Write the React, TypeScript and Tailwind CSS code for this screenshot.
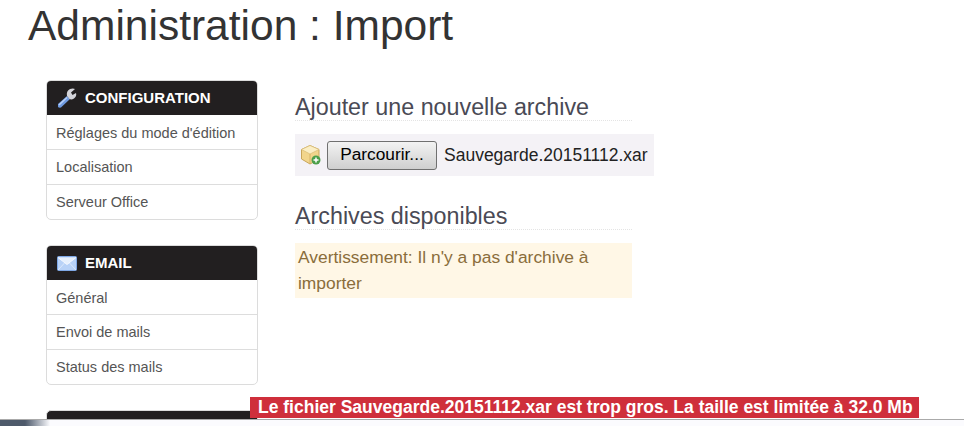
const font = { fontFamily: '"Liberation Sans", Arial, sans-serif' }

function WrenchIcon() {
  return (
    <svg width="22" height="22" viewBox="0 0 22 22" className="flex-shrink-0">
      <path d="M2 17 L11 9 L14 12 L5 20.5 Q3 21 2 20 Z" fill="#6f9ae0" />
      <path d="M3 18 L11 10.5" stroke="#b9d0f5" strokeWidth="1.5" fill="none" />
      <path d="M11 9 Q10 4 14 2 Q17 1 19 2 L15 5.5 L16.5 8 L20 6 Q21 9 18 11.5 Q15.5 13 13.5 12 Z" fill="#d4d4da" />
    </svg>
  )
}

function MailIcon() {
  return (
    <svg width="20" height="15" viewBox="0 0 20 15" className="flex-shrink-0">
      <rect x="0.5" y="0.5" width="19" height="14" rx="1" fill="#b8d2f7" stroke="#7fa8e6" />
      <path d="M1 1.5 L10 8.5 L19 1.5" fill="#e6f0fd" stroke="#f4f8ff" strokeWidth="1" />
      <path d="M1 14 L7.5 7 M19 14 L12.5 7" stroke="#dce9fb" strokeWidth="1" fill="none" />
    </svg>
  )
}

function PackageIcon() {
  return (
    <svg width="22" height="22" viewBox="0 0 22 22" className="flex-shrink-0">
      <path d="M10 1.5 L19 5.5 L19 15 L10 20 L1.5 15 L1.5 5.5 Z" fill="#f2d58c" stroke="#c9a65a" />
      <path d="M1.5 5.5 L10 10 L19 5.5 L10 1.5 Z" fill="#fbeec4" stroke="#d8bb75" strokeWidth="0.7" />
      <path d="M10 10 L10 20" stroke="#d0ab60" strokeWidth="0.8" />
      <circle cx="16" cy="16" r="4.5" fill="#4c9f4a" />
      <path d="M16 13.5 V18.5 M13.5 16 H18.5" stroke="#fff" strokeWidth="1.5" />
    </svg>
  )
}

function SideCard({ icon, title, items }: { icon: React.ReactNode; title: string; items: string[] }) {
  return (
    <div className="w-[212px] rounded-[5px] border border-[#dcdcdc] bg-white">
      <div className="flex items-center gap-[7px] h-[34px] pl-[9px] bg-[#221f20] rounded-t-[4px] text-white font-bold text-[15px]">
        <span className="flex w-[22px] justify-center">{icon}</span>
        <span>{title}</span>
      </div>
      {items.map((item, i) => (
        <div
          key={item}
          className={`flex items-center pl-[9px] text-[14.5px] text-[#555555] ${i > 0 ? 'h-[35px] pt-[2px] border-t border-[#dddddd]' : 'h-[34px] pt-[3px]'}`}
        >
          {item}
        </div>
      ))}
    </div>
  )
}

export default function App() {
  return (
    <div style={font} className="relative h-[426px] w-[964px] overflow-hidden bg-white text-[#333333]">
      <h1 className="pl-[28px] h-[80px] text-[42.5px] leading-[52px] font-normal text-[#333333]">
        Administration : Import
      </h1>

      <div className="flex pl-[46px] gap-[37px]">
        <div className="flex flex-col gap-[25px] w-[212px]">
          <SideCard
            icon={<WrenchIcon />}
            title="CONFIGURATION"
            items={["Réglages du mode d'édition", 'Localisation', 'Serveur Office']}
          />
          <SideCard
            icon={<MailIcon />}
            title="EMAIL"
            items={['Général', 'Envoi de mails', 'Status des mails']}
          />
          <div className="h-[40px] rounded-t-[5px] border border-[#dcdcdc] bg-[#221f20]" />
        </div>

        <div className="w-[360px] pt-[14px]">
          <h2 className="h-[27px] w-[337px] border-b border-dotted border-[#e4e4e4] text-[23.3px] leading-[26px] font-normal text-[#4a4a55] whitespace-nowrap">
            Ajouter une nouvelle archive
          </h2>
          <div className="mt-[13px] flex items-center h-[42px] w-[359px] pl-[5px] bg-[#f4f2f6]">
            <PackageIcon />
            <button className="ml-[5px] h-[29px] w-[110px] rounded-[3px] border border-[#707070] bg-gradient-to-b from-[#f3f3f3] to-[#cfcfcf] text-[17.3px] text-black">
              Parcourir...
            </button>
            <span className="ml-[7px] text-[17.5px] text-[#222222] whitespace-nowrap">Sauvegarde.20151112.xar</span>
          </div>
          <h2 className="mt-[26px] h-[28px] w-[337px] border-b border-dotted border-[#e4e4e4] pt-[1px] text-[23.3px] leading-[26px] font-normal text-[#4a4a55]">
            Archives disponibles
          </h2>
          <div className="mt-[13px] w-[337px] h-[55px] bg-[#fff7e6] pl-[3px] pt-[1px] text-[17.4px] leading-[26px] text-[#8a6d3b]">
            Avertissement: Il n'y a pas d'archive à importer
          </div>
        </div>
      </div>

      {/* Bandeau d'erreur et barre du bas, par-dessus la page */}
      <div className="absolute left-[250px] top-[397px] flex h-[21px] w-[669px] items-center bg-[#cf2f3b] pl-[8px] text-[17.5px] font-bold text-white whitespace-nowrap">
        Le fichier Sauvegarde.20151112.xar est trop gros. La taille est limitée à 32.0 Mb
      </div>
      <div className="absolute inset-x-0 top-[419px] h-[7px] border-t border-[#aaaaaa] bg-[#fbfbfe]">
        <div className="h-[6px] w-[50px] bg-gradient-to-r from-[#4e5a6b] via-[#4e5a6b] to-[#fbfbfe]" />
      </div>
    </div>
  )
}
